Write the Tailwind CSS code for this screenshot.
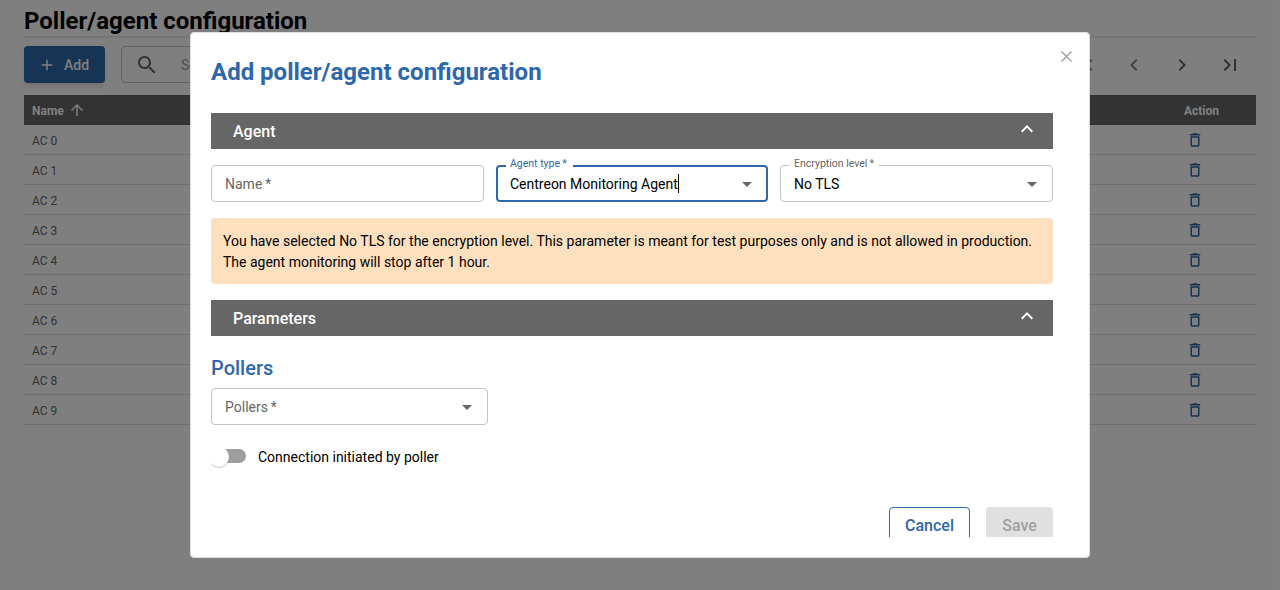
<!DOCTYPE html>
<html lang="en">
<head>
<meta charset="utf-8">
<title>Poller/agent configuration</title>
<script src="https://cdn.jsdelivr.net/npm/@tailwindcss/browser@4"></script>
</head>
<body class="relative h-[590px] w-[1280px] overflow-hidden bg-white font-['Roboto',sans-serif] text-black">
<svg class="hidden">
  <symbol id="trash" viewBox="0 0 24 24"><path d="M6 19c0 1.100.9 2 2 2h8c1.100 0 2-.9 2-2V7H6zM8 9h8v10H8zm7.500-5-1-1h-5l-1 1H5v2h14V4z"/></symbol>
  <symbol id="up" viewBox="0 0 24 24"><path d="M12 8l-6 6 1.410 1.410L12 10.830l4.590 4.580L18 14z"/></symbol>
  <symbol id="caret" viewBox="0 0 24 24"><path d="M7 10l5 5 5-5z"/></symbol>
</svg>

<main class="flex flex-col px-6">
  <header class="h-[38px] border-b-2 border-[#ededed] pt-[7px]">
    <h1 class="text-2xl leading-7 font-bold whitespace-nowrap">Poller/agent configuration</h1>
  </header>
  <div class="mt-2 flex h-[37px] items-center gap-4">
    <button class="flex h-[37px] w-[81px] items-center gap-[8px] rounded bg-[#2e68aa] pl-[14px] text-sm font-medium text-white shadow-md">
      <svg class="size-[18px] fill-current" viewBox="0 0 24 24"><path d="M19 13h-6v6h-2v-6H5v-2h6V5h2v6h6z"/></svg>Add
    </button>
    <div class="flex h-[37px] w-[400px] items-center gap-[22px] rounded border border-[#c4c4c4] pl-[13px] text-sm text-[#a0a0a0]">
      <svg class="size-6 fill-[#666]" viewBox="0 0 24 24"><path d="M15.500 14h-.79l-.28-.27C15.410 12.590 16 11.110 16 9.500 16 5.910 13.090 3 9.500 3S3 5.910 3 9.500 5.910 16 9.500 16c1.610 0 3.090-.59 4.230-1.570l.27.28v.79l5 4.990L20.490 19zm-6 0C7.010 14 5 11.990 5 9.500S7.010 5 9.500 5 14 7.010 14 9.500 11.990 14 9.500 14"/></svg>Search
    </div>
    <nav class="mr-[14px] ml-auto flex gap-6">
      <svg class="size-6 fill-[#858585]" viewBox="0 0 24 24"><path d="M18.410 16.590 13.820 12l4.590-4.590L17 6l-6 6 6 6zM6 6h2v12H6z"/></svg>
      <svg class="size-6 fill-[#858585]" viewBox="0 0 24 24"><path d="M15.410 7.410 14 6l-6 6 6 6 1.410-1.410L10.830 12z"/></svg>
      <svg class="size-6 fill-[#666]" viewBox="0 0 24 24"><path d="M10 6 8.590 7.410 13.170 12l-4.580 4.590L10 18l6-6z"/></svg>
      <svg class="size-6 fill-[#666]" viewBox="0 0 24 24"><path d="M5.590 7.410 10.180 12l-4.590 4.590L7 18l6-6-6-6zM16 6h2v12h-2z"/></svg>
    </nav>
  </div>
  <section class="mt-3 flex flex-col text-xs">
    <div class="flex h-[30px] items-center justify-between bg-[#666] pt-px pr-[37px] pl-2 font-bold text-white">
      <span class="flex items-center gap-1">Name
        <svg class="mb-px size-[18px] fill-current" viewBox="0 0 24 24"><path d="m4 12 1.410 1.410L11 7.830V20h2V7.830l5.580 5.590L20 12l-8-8z"/></svg>
      </span>
      <span>Action</span>
    </div>
    <div id="rows" class="flex flex-col text-[#666]"></div>
  </section>
</main>

<template id="row">
  <div class="flex h-[30px] items-center justify-between border-b border-[#dedede] pr-[52px] pl-2">
    <span class="pt-[3px]"></span><svg class="mt-px size-[18px] fill-[#2e68aa]"><use href="#trash"/></svg>
  </div>
</template>

<div class="absolute inset-0 bg-black/50"></div>

<div class="absolute top-8 left-[190px] flex h-[526px] w-[900px] flex-col rounded border border-[#dedede] bg-white px-5 pb-5">
  <svg class="absolute top-[17.500px] right-[17.500px] size-[11px] stroke-[#9a9a9a]" viewBox="0 0 11 11" fill="none"><path d="M.5.5l10 10M10.500.5l-10 10" stroke-width="1.300"/></svg>
  <h2 class="mt-[25px] text-2xl leading-7 font-bold text-[#2e68aa]">Add poller/agent configuration</h2>
  <div class="mt-[27px] flex h-[424px] w-[842px] flex-col overflow-hidden">
    <div class="flex h-9 shrink-0 items-center justify-between bg-[#666] pr-[14px] pl-[22px] text-base font-medium text-white"><span class="pt-0.5">Agent</span>
      <svg class="mb-1 size-6 fill-white"><use href="#up"/></svg>
    </div>
    <div class="mt-4 grid h-[37px] shrink-0 grid-cols-[273px_272px_273px] gap-3 text-sm">
      <div class="flex items-center rounded border border-[#c4c4c4] px-[13px] text-[#666]">Name&thinsp;*</div>
      <div class="relative flex items-center justify-between rounded border-2 border-[#2e68aa] pr-[7px] pl-3">
        <span class="absolute -top-[12px] left-2 bg-white pr-[6px] pl-1 text-[10.500px] leading-[18px] text-[#2e68aa]">Agent type&thinsp;*</span>
        <span class="flex items-center">Centreon Monitoring Agent<i class="h-[19px] w-px bg-black"></i></span>
        <svg class="size-6 fill-[#666]"><use href="#caret"/></svg>
      </div>
      <div class="relative flex items-center justify-between rounded border border-[#c4c4c4] pr-2 pl-[13px]">
        <span class="absolute -top-[11px] left-2 bg-white px-[5px] text-[10.500px] leading-[18px] text-[#666]">Encryption level&thinsp;*</span>
        <span>No TLS</span>
        <svg class="size-6 fill-[#666]"><use href="#caret"/></svg>
      </div>
    </div>
    <div class="mt-4 h-[66px] shrink-0 rounded bg-[#fee0be] px-3 pt-[13px] text-sm leading-[21px] whitespace-nowrap">You have selected No TLS for the encryption level. This parameter is meant for test purposes only and is not allowed in production.<br>The agent monitoring will stop after 1 hour.</div>
    <div class="mt-4 flex h-9 shrink-0 items-center justify-between bg-[#666] pr-[14px] pl-[22px] text-base font-medium text-white"><span class="pt-0.5">Parameters</span>
      <svg class="mb-1 size-6 fill-white"><use href="#up"/></svg>
    </div>
    <h3 class="mt-5 text-xl leading-6 font-medium text-[#2e68aa]">Pollers</h3>
    <div class="mt-2 flex h-[37px] w-[277px] shrink-0 items-center justify-between rounded border border-[#c4c4c4] pr-2 pl-[13px] text-sm text-[#666]">Pollers&thinsp;*
      <svg class="size-6 fill-[#666]"><use href="#caret"/></svg>
    </div>
    <div class="mt-[21px] flex h-[22px] shrink-0 items-center text-sm">
      <span class="relative mb-0.5 h-[14px] w-[35px] rounded-full bg-[#9e9e9e]"><i class="absolute top-[-2px] left-[-2px] size-5 rounded-full bg-white shadow-[0_1px_1px_rgba(0,0,0,0.22)]"></i></span>
      <span class="ml-3">Connection initiated by poller</span>
    </div>
    <div class="mt-[39px] flex shrink-0 justify-end gap-4 text-base font-medium">
      <button class="h-[37px] w-[81px] rounded border border-[#2e68aa] text-[#2e68aa]">Cancel</button>
      <button class="h-[37px] w-[67px] rounded bg-[#e0e0e0] text-[#a0a0a0]">Save</button>
    </div>
  </div>
</div>

<script>
  const row = document.getElementById('row');
  for (let i = 0; i < 10; i++) {
    const item = row.content.cloneNode(true);
    item.querySelector('span').textContent = 'AC ' + i;
    document.getElementById('rows').append(item);
  }
</script>
</body>
</html>
